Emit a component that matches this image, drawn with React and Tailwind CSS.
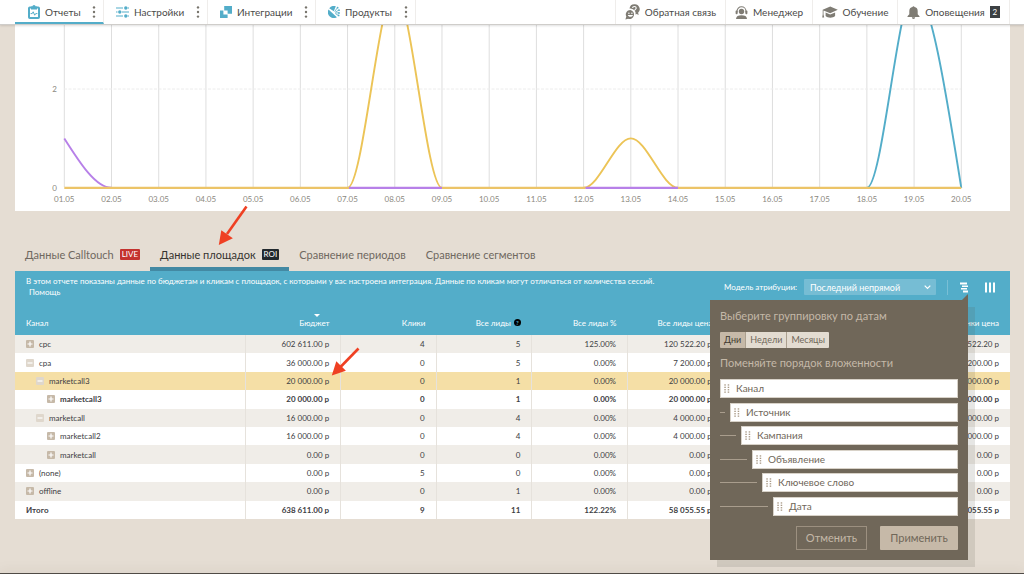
import React, { useState } from 'react';

const DAYS = Array.from({ length: 20 }, (_, i) => `${String(i + 1).padStart(2, '0')}.05`);

const ROWS = [
  { name: 'cpc', level: 0, open: false, budget: '602 611.00 р', clicks: 4, leads: 5, percent: '125.00%', price: '120 522.20 р' },
  { name: 'cpa', level: 0, open: true, budget: '36 000.00 р', clicks: 0, leads: 5, percent: '0.00%', price: '7 200.00 р' },
  { name: 'marketcall3', level: 1, open: true, active: true, budget: '20 000.00 р', clicks: 0, leads: 1, percent: '0.00%', price: '20 000.00 р' },
  { name: 'marketcall3', level: 2, open: false, bold: true, budget: '20 000.00 р', clicks: 0, leads: 1, percent: '0.00%', price: '20 000.00 р' },
  { name: 'marketcall', level: 1, open: true, budget: '16 000.00 р', clicks: 0, leads: 4, percent: '0.00%', price: '4 000.00 р' },
  { name: 'marketcall2', level: 2, open: false, budget: '16 000.00 р', clicks: 0, leads: 4, percent: '0.00%', price: '4 000.00 р' },
  { name: 'marketcall', level: 2, open: false, budget: '0.00 р', clicks: 0, leads: 0, percent: '0.00%', price: '0.00 р' },
  { name: '(none)', level: 0, open: false, budget: '0.00 р', clicks: 5, leads: 0, percent: '0.00%', price: '0.00 р' },
  { name: 'offline', level: 0, open: false, budget: '0.00 р', clicks: 0, leads: 1, percent: '0.00%', price: '0.00 р' },
];

const INDENT = ['pl-[11px]', 'pl-[21px]', 'pl-[32px]'];

const LEVELS = [
  { name: 'Канал', line: 'hidden' },
  { name: 'Источник', line: 'w-[5px]' },
  { name: 'Кампания', line: 'w-[16px]' },
  { name: 'Объявление', line: 'w-[27px]' },
  { name: 'Ключевое слово', line: 'w-[37px]' },
  { name: 'Дата', line: 'w-[48px]' },
];

const ReportsIcon = () => (
  <svg width="12" height="14" viewBox="0 0 12 14" fill="none">
    <rect x="1" y="2.400" width="10" height="10.600" rx="0.800" stroke="#53adc9" strokeWidth="2" />
    <path d="M3 1.600h1.400a1.600 1.600 0 0 1 3.200 0H9v3H3z" fill="#53adc9" />
    <path d="M2.600 8.600h1.600l1-1.800 1.500 3.400 1-1.600h1.700" stroke="#53adc9" strokeWidth="1" />
  </svg>
);

const SettingsIcon = () => (
  <svg width="13" height="12" viewBox="0 0 13 12" fill="#53adc9">
    <path d="M0 1.500h7v1H0zM11.600 1.500H13v1h-1.400zM0 5.500h1.500v1H0zM6 5.500h7v1H6zM0 9.500h7v1H0zM11.600 9.500H13v1h-1.400z" />
    <circle cx="9.800" cy="2" r="1.700" />
    <circle cx="3.800" cy="6" r="1.700" />
    <circle cx="9.800" cy="10" r="1.700" />
  </svg>
);

const IntegrationsIcon = () => (
  <svg width="12" height="12" viewBox="0 0 12 12" fill="#53adc9">
    <path d="M0 4.400h3.400v4.200h4.200V12H0z" />
    <path fillRule="evenodd" d="M4.200 0H12v7.800H4.200zM4.200 4.400v3.400h3.400V4.400z" />
  </svg>
);

const ProductsIcon = () => (
  <svg width="12" height="12" viewBox="0 0 12 12" fill="#53adc9">
    <path d="M1.200 2.200A6 6 0 0 1 7.800.3L5.800 5.200zM.5 3.400 8.900 11.200A6 6 0 0 1 .5 3.400z" />
    <path d="M6.600 5.600 9.400 1.800M7.200 6.200l3.600-2M7.400 7l3.600-.2M7.400 7.600l3.200 2" stroke="#53adc9" strokeWidth="0.800" />
    <circle cx="9.600" cy="1.700" r="0.900" />
    <circle cx="11" cy="4.200" r="0.900" />
    <circle cx="11" cy="7" r="0.900" />
    <circle cx="10.600" cy="9.400" r="0.900" />
  </svg>
);

const FeedbackIcon = () => (
  <svg width="15" height="16" viewBox="0 0 15 16" fill="#7f7c74">
    <path d="M9.300.3a4.900 4.900 0 0 0-4.800 4.200 5.200 5.200 0 0 1 6 6c.4 0 .8-.2 1.200-.4l2 .9-.6-2.200A4.900 4.900 0 0 0 9.300.3z" />
    <path d="M7.600 4.100c0-2.200 3.600-2.200 3.600 0 0 1.300-1.700 1.300-1.700 2.700" fill="none" stroke="#fff" strokeWidth="1.100" />
    <circle cx="9.700" cy="8.300" r="0.700" fill="#fff" />
    <path d="M5.300 6a4.500 4.500 0 0 0-4 6.600L.4 15.400l2.700-.7A4.500 4.500 0 1 0 5.300 6z" />
    <circle cx="3.900" cy="9.300" r="0.700" fill="#fff" />
    <circle cx="6.900" cy="9.300" r="0.700" fill="#fff" />
    <path d="M2.800 11h5.200c-.4 2.400-4.800 2.400-5.200 0z" fill="#fff" />
  </svg>
);

const ManagerIcon = () => (
  <svg width="13" height="13" viewBox="0 0 13 13" fill="#7f7c74">
    <path d="M2 6.400V5.200a4.500 4.500 0 0 1 9 0v1.200" fill="none" stroke="#7f7c74" strokeWidth="1.100" />
    <rect x="0.600" y="4.600" width="2" height="3.600" rx="0.900" />
    <rect x="10.400" y="4.600" width="2" height="3.600" rx="0.900" />
    <circle cx="6.500" cy="5.500" r="2.700" />
    <path d="M1 13c.2-2.700 2.200-3.700 5.500-3.700S11.800 10.300 12 13z" />
  </svg>
);

const StudyIcon = () => (
  <svg width="16" height="13" viewBox="0 0 16 13" fill="#7f7c74">
    <path d="M8.200.4 15.800 3.800 8.200 7.300 1.500 4.400v3.800l.7 3.300H.2L.7 8.200V3.800z" />
    <path d="M3.600 6.400l4.600 2.100 4.900-2.100v3.700c-2.200 2.300-7.300 2.300-9.500 0z" />
  </svg>
);

const BellIcon = () => (
  <svg width="13" height="13" viewBox="0 0 13 13" fill="#7f7c74">
    <path d="M6.500.2a1 1 0 0 0-1 .9A4 4 0 0 0 2.300 5v3.200L.5 10.300v.6h12v-.6l-1.800-2.100V5a4 4 0 0 0-3.200-3.900 1 1 0 0 0-1-.9zM4.800 11.300h3.400a1.700 1.700 0 0 1-3.400 0z" />
  </svg>
);

const DotsIcon = () => (
  <svg width="4" height="12" viewBox="0 0 4 12" fill="#77746c">
    <circle cx="2" cy="1.400" r="1.200" />
    <circle cx="2" cy="6" r="1.200" />
    <circle cx="2" cy="10.600" r="1.200" />
  </svg>
);

const GripIcon = () => (
  <svg width="6" height="9" viewBox="0 0 6 9" fill="#a99a87">
    {[0.3, 2.7, 5.1, 7.5].map((y) => (
      <React.Fragment key={y}>
        <rect x="0.300" y={y} width="1.500" height="1.300" />
        <rect x="3.700" y={y} width="1.500" height="1.300" />
      </React.Fragment>
    ))}
  </svg>
);

const NAV_LEFT = [
  { name: 'Отчеты', icon: ReportsIcon, width: 'w-[89px] pl-[13px]', active: true },
  { name: 'Настройки', icon: SettingsIcon, width: 'w-[104px] pl-[12px]' },
  { name: 'Интеграции', icon: IntegrationsIcon, width: 'w-[108px] pl-[12px]' },
  { name: 'Продукты', icon: ProductsIcon, width: 'w-[100px] pl-[12px]' },
];

const NAV_RIGHT = [
  { name: 'Обратная связь', icon: FeedbackIcon, width: 'w-[110px]' },
  { name: 'Менеджер', icon: ManagerIcon, width: 'w-[87px]' },
  { name: 'Обучение', icon: StudyIcon, width: 'w-[85px]' },
  { name: 'Оповещения', icon: BellIcon, width: 'w-[113px]', badge: 2 },
];

const Header = () => (
  <header className="relative z-10 h-[25px] bg-white border-b border-[#cfcdca] shadow-[0_1px_2px_rgba(0,0,0,0.12)] pl-[15px] pr-[14px] flex justify-between text-[10px] text-[#4a4a48]">
    <nav className="flex">
      {NAV_LEFT.map(({ name, icon: Icon, width, active }) => (
        <div
          key={name}
          className={`${width} flex items-center justify-between pr-[7px] border-r border-[#efedeb] ${
            active ? 'border-b-2 border-b-[#53adc9] pt-[2px]' : ''
          }`}
        >
          <a href="#" className="flex items-center gap-[5px]">
            <Icon />
            {name}
          </a>
          <button type="button" aria-label={name}>
            <DotsIcon />
          </button>
        </div>
      ))}
    </nav>
    <nav className="flex">
      {NAV_RIGHT.map(({ name, icon: Icon, width, badge }) => (
        <a
          key={name}
          href="#"
          className={`${width} flex items-center justify-center gap-[5px] whitespace-nowrap border-l border-[#efedeb] last:border-r`}
        >
          <Icon />
          {name}
          {badge && (
            <span className="w-[10px] h-[12px] bg-[#3c4043] text-white text-[8px] leading-[12px] text-center">
              {badge}
            </span>
          )}
        </a>
      ))}
    </nav>
  </header>
);

const STEP = 47.21;
const px = (day) => 49.3 + STEP * (day - 1);
const py = (value) => 162.8 - 49.4 * value;

// one monotone segment between two neighbouring days
const seg = (day, from, to, c1 = from, c2 = to) =>
  `M${px(day)} ${py(from)}C${px(day) + STEP / 3} ${py(c1)} ${px(day + 1) - STEP / 3} ${py(c2)} ${px(day + 1)} ${py(to)}`;

const flat = (from, to) => `M${px(from)} ${py(0)}H${px(to)}`;

const Chart = () => (
  <section className="bg-white">
    <svg viewBox="0 0 995 186" className="block w-full" fill="none">
      {DAYS.map((day, i) => (
        <g key={day}>
          <path d={`M${px(i + 1)} 0V162`} stroke="#dedede" />
          <text x={px(i + 1)} y="177" textAnchor="middle" fontSize="8" fill="#8b8880">
            {day}
          </text>
        </g>
      ))}
      <path d={`M49 ${py(2)}H946`} stroke="#ececec" strokeDasharray="3 1.500" />
      <text x="42" y={py(2) + 3} textAnchor="end" fontSize="8" fill="#8b8880">2</text>
      <text x="42" y={py(0) + 3} textAnchor="end" fontSize="8" fill="#8b8880">0</text>
      <g strokeWidth="1.900">
        <path d={seg(1, 1, 0, 0.5, 0)} stroke="#b780e8" />
        <path d={`${seg(18, 0, 4)}${seg(19, 4, 0, 4, 2)}`} stroke="#53adc9" />
        <path d={`${seg(7, 0, 4)}${seg(8, 4, 0)}${seg(12, 0, 1)}${seg(13, 1, 0)}`} stroke="#ecc457" />
        <path d={`${flat(1, 7.03)}${flat(9, 12.04)}${flat(14, 20)}`} stroke="#ecc468" strokeWidth="2.200" />
        <path d={`${flat(7.03, 9)}${flat(12.04, 14)}`} stroke="#b780e8" strokeWidth="2.200" />
      </g>
    </svg>
  </section>
);

const Tabs = () => (
  <div className="flex mt-[22px] text-[11px] text-[#6f6860] leading-[17px]" role="tablist">
    <button type="button" role="tab" className="flex items-center gap-[6px] px-[10px] pt-[13px] pb-[4px] border-b-4 border-transparent">
      Данные Calltouch
      <span className="bg-[#c4332f] text-white text-[8px] leading-[11px] px-[2px] rounded-[1px]">LIVE</span>
    </button>
    <button
      type="button"
      role="tab"
      aria-selected="true"
      className="flex items-center gap-[6px] px-[10px] pt-[13px] pb-[4px] border-b-4 border-[#4389a3] text-[#35332f]"
    >
      Данные площадок
      <span className="bg-[#22292e] text-white text-[8px] leading-[11px] px-[2px] rounded-[1px]">ROI</span>
    </button>
    <button type="button" role="tab" className="px-[10px] pt-[13px] pb-[4px] border-b-4 border-transparent">
      Сравнение периодов
    </button>
    <button type="button" role="tab" className="px-[10px] pt-[13px] pb-[4px] border-b-4 border-transparent">
      Сравнение сегментов
    </button>
  </div>
);

const GroupingPopup = () => {
  const [period, setPeriod] = useState('Дни');

  return (
    <div className="absolute z-10 right-[42px] top-[29px] w-[258px] bg-[#706759] px-[10px] pt-[9px] pb-[10px] shadow-[7px_7px_0_rgba(90,85,75,0.15)] text-[#c4b8a8] text-[11px]">
      <svg className="absolute right-0 -top-[6px]" width="6" height="6" viewBox="0 0 6 6">
        <path d="M6 0v6H0z" fill="#706759" />
      </svg>
      <h2 className="leading-[14px]">Выберите группировку по датам</h2>
      <div className="flex mt-[9px] text-[9px] text-[#706759]">
        {['Дни', 'Недели', 'Месяцы'].map((name) => (
          <button
            key={name}
            type="button"
            onClick={() => setPeriod(name)}
            className={`h-[16px] px-[4px] border-r border-[#aba08f] last:border-r-0 first:rounded-l-[1px] last:rounded-r-[1px] ${
              period === name ? 'bg-[#c6b9a8] text-[#40392f]' : 'bg-[#e3dcd1]'
            }`}
          >
            {name}
          </button>
        ))}
      </div>
      <h2 className="leading-[14px] mt-[8px]">Поменяйте порядок вложенности</h2>
      <ul className="flex flex-col justify-between h-[137px] mt-[9px] text-[10px] text-[#706759]">
        {LEVELS.map(({ name, line }) => (
          <li key={name} className="flex items-center">
            <span className={`${line} h-px bg-[#a99d8d] mr-[5px]`} />
            <span className="flex-1 h-[19px] bg-white border border-[#d8d2c8] flex items-center gap-[6px] pl-[3px]">
              <GripIcon />
              {name}
            </span>
          </li>
        ))}
      </ul>
      <div className="flex justify-end gap-[13px] mt-[10px]">
        <button type="button" className="w-[71px] h-[24px] border border-[#9c9080]">
          Отменить
        </button>
        <button type="button" className="w-[78px] h-[24px] bg-[#c6b9a8] text-[#706759] rounded-[1px]">
          Применить
        </button>
      </div>
    </div>
  );
};

const Toolbar = () => (
  <div className="flex items-start justify-between pl-[11px] pr-[15px] pt-[5px] h-[42px] text-[8px] leading-[11px]">
    <p>
      В этом отчете показаны данные по бюджетам и кликам с площадок, с которыми у вас настроена интеграция. Данные по
      кликам могут отличаться от количества сессий.
      <br />
      <a href="#" className="ml-[3px]">Помощь</a>
    </p>
    <div className="flex items-center shrink-0 pt-[3px]">
      <label htmlFor="attribution" className="mr-[7px]">Модель атрибуции:</label>
      <div className="relative">
        <select
          id="attribution"
          className="appearance-none block w-[132px] h-[16px] pl-[6px] bg-[#76bdd4] rounded-[1px] text-[9px] text-white"
        >
          <option>Последний непрямой</option>
        </select>
        <svg className="absolute right-[5px] top-[6px] pointer-events-none" width="7" height="5" viewBox="0 0 7 5" fill="none">
          <path d="M.7.7l2.800 2.800L6.300.7" stroke="#fff" strokeWidth="1.200" />
        </svg>
      </div>
      <span className="w-px h-[15px] bg-[#79bfd5] ml-[11px] mr-[12px]" />
      <button type="button" aria-label="Группировка">
        <svg width="8" height="11" viewBox="0 0 8 11" fill="#fff">
          <path d="M0 .5h7v2H0zM2 3.500h6v1.600H2zM1 6h6v1.600H1zM3 8.600h5v2H3z" />
        </svg>
      </button>
      <button type="button" aria-label="Колонки" className="ml-[17px]">
        <svg width="10" height="11" viewBox="0 0 10 11" fill="#fff">
          <path d="M0 .5h2v10H0zM4 .5h2v10H4zM8 .5h2v10H8z" />
        </svg>
      </button>
    </div>
  </div>
);

const Toggle = ({ open }) => (
  <button type="button" aria-label="Развернуть" className="mr-[5px]">
    <svg width="8" height="8" viewBox="0 0 8 8" fill="none" className="block">
      <rect width="8" height="8" rx="1" fill={open ? '#dfd7cc' : '#c6b9a8'} />
      <path d={open ? 'M1.500 4h5' : 'M1.500 4h5M4 1.500v5'} stroke="#fff" strokeWidth="1.200" />
    </svg>
  </button>
);

const cell = 'p-0 pr-[11px] text-right border-l border-[#e6e2dc] whitespace-nowrap';
const head = 'p-0 pr-[11px] pb-[3px] text-right font-normal whitespace-nowrap';

const ReportTable = () => (
  <table className="w-full h-[206px] table-fixed border-collapse text-[8px] leading-[12px] text-[#3d4043]">
    <colgroup>
      <col className="w-[230px]" />
      {Array.from({ length: 8 }, (_, i) => (
        <col key={i} />
      ))}
    </colgroup>
    <thead className="bg-[#53adc9] text-white">
      <tr className="h-[22px]">
        <th className="p-0 pl-[11px] pb-[3px] text-left font-normal">Канал</th>
        <th className={head}>
          <span className="relative">
            Бюджет
            <svg className="absolute left-1/2 -top-[4px]" width="6" height="3" viewBox="0 0 6 3">
              <path d="M0 0h6L3 3z" fill="#fff" />
            </svg>
          </span>
        </th>
        <th className={head}>Клики</th>
        <th className={head}>
          <span className="flex items-center justify-end gap-[3px]">
            Все лиды
            <span className="size-[7px] rounded-full bg-black text-[#53adc9] text-[6px] leading-[7px] text-center font-bold">?</span>
          </span>
        </th>
        <th className={head}>Все лиды %</th>
        <th className={head}>Все лиды цена</th>
        <th colSpan={2} />
        <th className={head}>Звонки цена</th>
      </tr>
    </thead>
    <tbody>
      {ROWS.map((row, i) => (
        <tr
          key={i}
          className={`${row.active ? 'bg-[#f5dfa6]' : 'odd:bg-[#f0ede8] even:bg-white'} ${row.bold ? 'font-bold' : ''}`}
        >
          <td className={`p-0 ${INDENT[row.level]}`}>
            <span className="flex items-center">
              <Toggle open={row.open} />
              {row.name}
            </span>
          </td>
          <td className={cell}>{row.budget}</td>
          <td className={cell}>{row.clicks}</td>
          <td className={cell}>{row.leads}</td>
          <td className={cell}>{row.percent}</td>
          <td className={cell}>{row.price}</td>
          <td colSpan={2} className={cell} />
          <td className={cell}>{row.price}</td>
        </tr>
      ))}
      <tr className="bg-white font-bold">
        <td className="p-0 pl-[11px]">Итого</td>
        <td className={cell}>638 611.00 р</td>
        <td className={cell}>9</td>
        <td className={cell}>11</td>
        <td className={cell}>122.22%</td>
        <td className={cell}>58 055.55 р</td>
        <td colSpan={2} className={cell} />
        <td className={cell}>58 055.55 р</td>
      </tr>
    </tbody>
  </table>
);

const Arrow = ({ className }) => (
  <svg className={`absolute z-20 pointer-events-none ${className}`} width="30" height="41" viewBox="0 0 30 41">
    <path d="M28.500 1.500L9 29" stroke="#ef4023" strokeWidth="2.600" />
    <path d="M.800 40L3.300 25.200l11.600 8z" fill="#ef4023" />
  </svg>
);

const ShortArrow = ({ className }) => (
  <svg className={`absolute z-20 pointer-events-none ${className}`} width="30" height="30" viewBox="0 0 30 30">
    <path d="M27.500 1.500L9 20.500" stroke="#ef4023" strokeWidth="2.600" />
    <path d="M.800 28.500L5.300 14.200l9.600 9.600z" fill="#ef4023" />
  </svg>
);

const App = () => {
  return (
    <div className="min-h-screen flex flex-col bg-[#e5ddd3] overflow-hidden font-['Lato','Open_Sans',sans-serif]">
      <Header />
      <main className="flex-1 pl-[15px] pr-[14px]">
        <Chart />
        <div className="relative">
          <Tabs />
          <Arrow className="left-[203px] -top-[28px]" />
        </div>
        <section className="relative bg-[#53adc9] text-white">
          <Toolbar />
          <ReportTable />
          <GroupingPopup />
          <ShortArrow className="left-[316px] top-[76px]" />
        </section>
      </main>
      <footer className="h-px bg-[#4f4b46] shadow-[0_0_12px_rgba(60,50,40,0.4)]" />
    </div>
  );
};

export default App;
